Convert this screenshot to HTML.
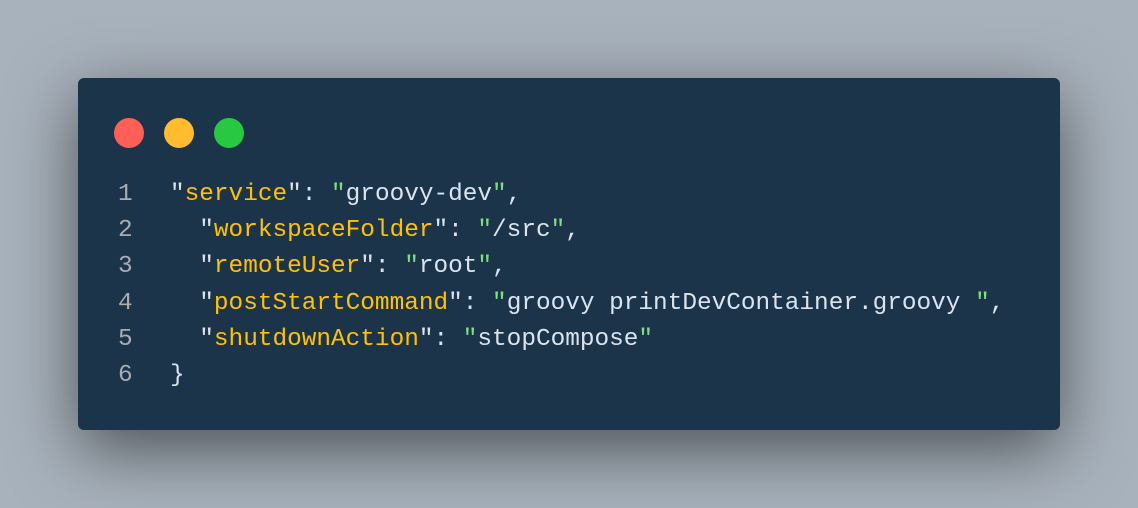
<!DOCTYPE html>
<html><head><style>
html,body{margin:0;padding:0;}
body{width:1138px;height:508px;background:#a8b2bc;position:relative;overflow:hidden;}
.card{position:absolute;left:78px;top:78px;width:982px;height:352px;background:#1b344a;border-radius:6px;box-shadow:0 20px 68px rgba(0,0,0,0.55);}
.dot{position:absolute;top:40px;width:30px;height:30px;border-radius:50%;}
pre{position:absolute;left:40px;top:99px;margin:0;font-family:"Liberation Mono",monospace;font-size:24.4px;line-height:36.2px;color:#dbe4ee;}
.n{color:#a7adb3;display:inline-block;width:52px;}
.k{color:#ffc107;}
.g{color:#7ee07e;}
</style></head><body>
<div class="card">
<div class="dot" style="left:36px;background:#ff5f57"></div>
<div class="dot" style="left:86px;background:#febc2e"></div>
<div class="dot" style="left:136px;background:#28c840"></div>
<pre><span class="n">1</span>"<span class="k">service</span>": <span class="g">"</span>groovy-dev<span class="g">"</span>,
<span class="n">2</span>  "<span class="k">workspaceFolder</span>": <span class="g">"</span>/src<span class="g">"</span>,
<span class="n">3</span>  "<span class="k">remoteUser</span>": <span class="g">"</span>root<span class="g">"</span>,
<span class="n">4</span>  "<span class="k">postStartCommand</span>": <span class="g">"</span>groovy printDevContainer.groovy <span class="g">"</span>,
<span class="n">5</span>  "<span class="k">shutdownAction</span>": <span class="g">"</span>stopCompose<span class="g">"</span>
<span class="n">6</span>}</pre>
</div>
</body></html>
